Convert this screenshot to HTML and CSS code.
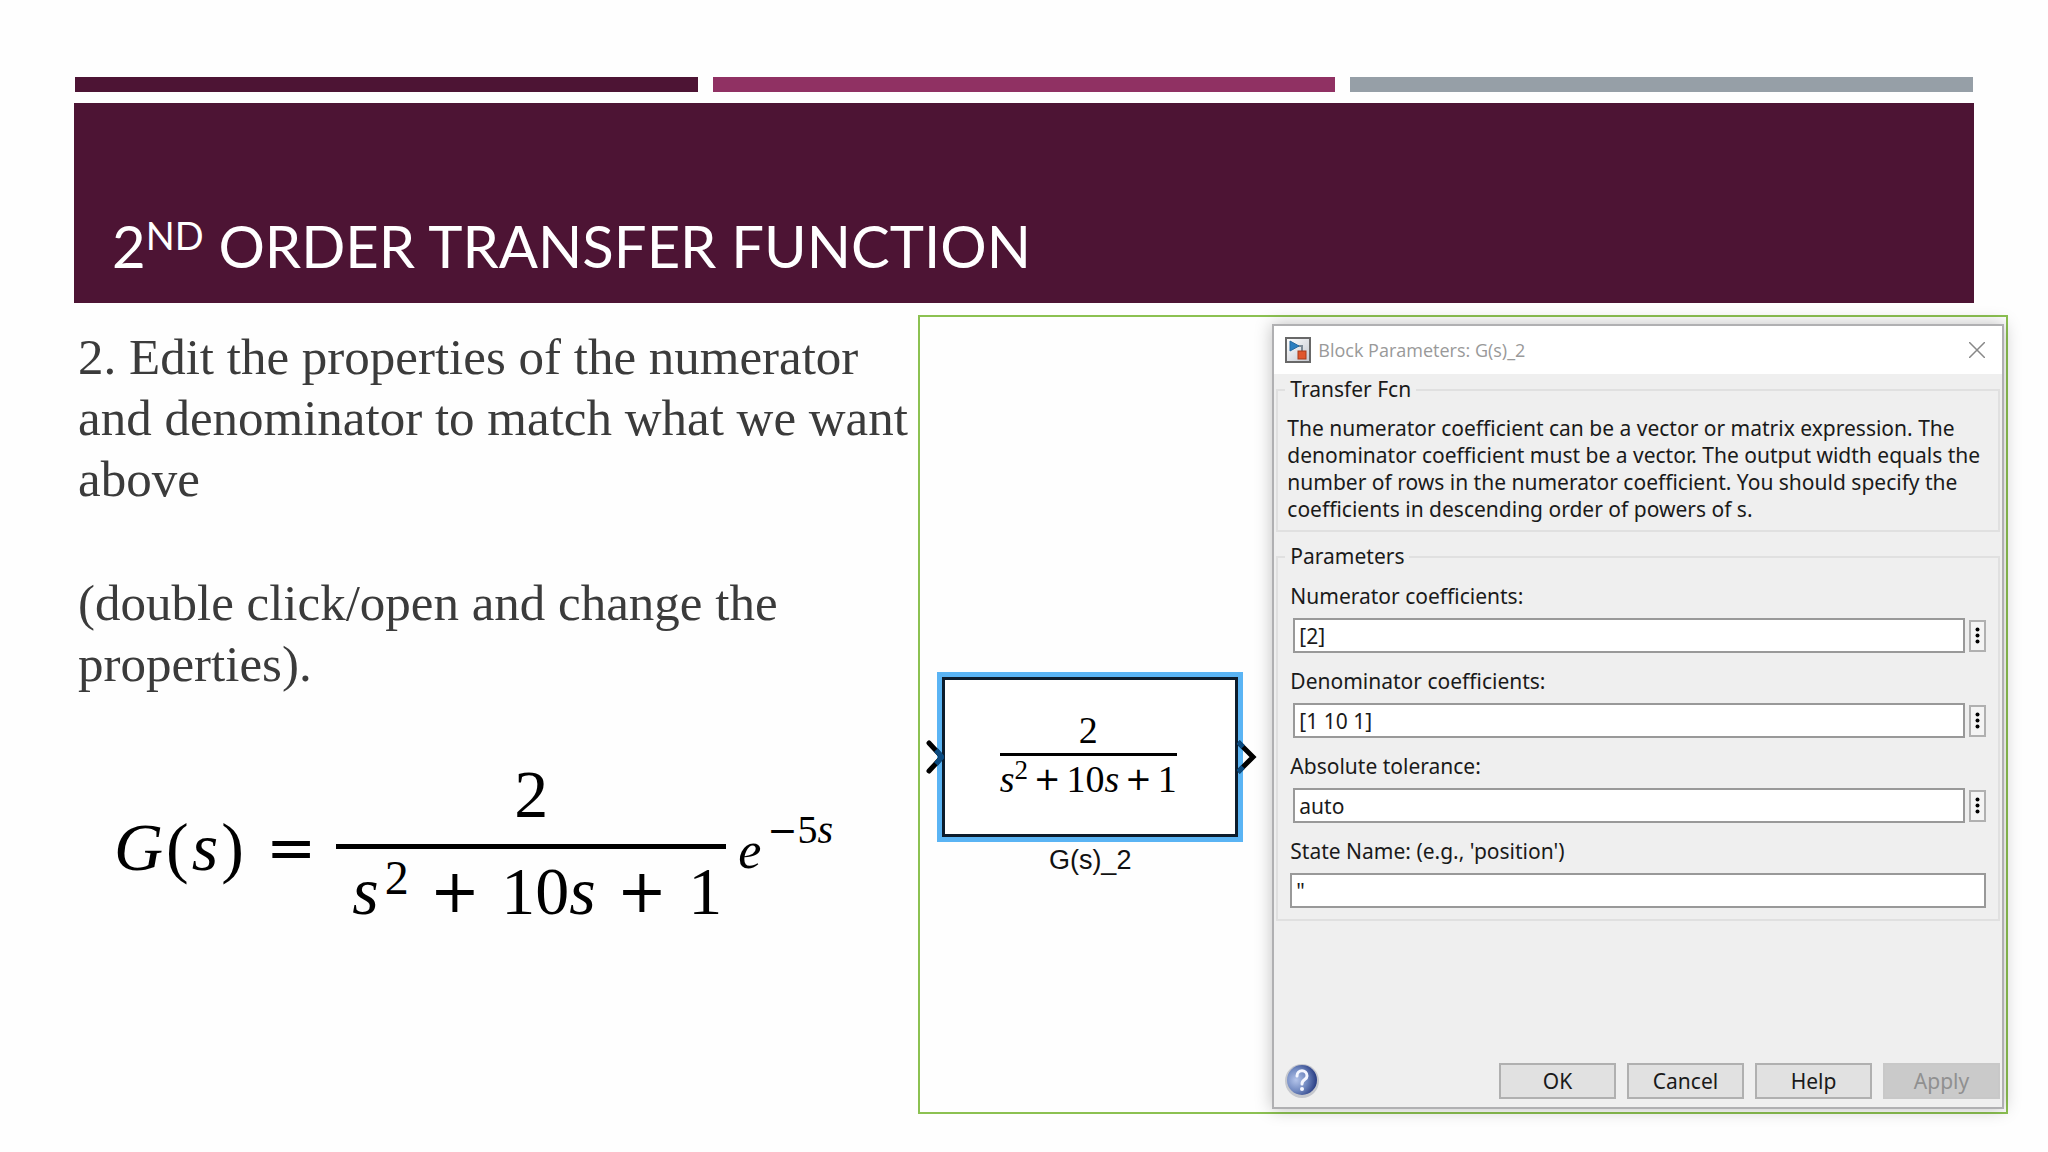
FILE: index.html
```html
<!DOCTYPE html>
<html lang="en">
<head>
    <meta charset="UTF-8">
    <title>2nd Order Transfer Function</title>
    <link rel="stylesheet" href="styles.css">
</head>
<body>
    <div class="stripes">
        <div class="stripe stripe-dark"></div>
        <div class="stripe stripe-pink"></div>
        <div class="stripe stripe-grey"></div>
    </div>

    <header class="banner">
        <h1>2<sup>ND</sup> ORDER TRANSFER FUNCTION</h1>
    </header>

    <main class="content">
        <section class="notes">
            <p>2. Edit the properties of the numerator and denominator to match what we want above</p>
            <p>(double click/open and change the properties).</p>

            <div class="equation">
                <span class="lhs"><i>G</i><span>(</span><i>s</i><span>)</span></span>
                <span class="operator equals">=</span>
                <span class="fraction">
                    <span class="numerator">2</span>
                    <span class="denominator"><span><i>s</i><sup>2</sup></span><span class="operator">+</span><span>10<i>s</i></span><span class="operator">+</span><span>1</span></span>
                </span>
                <span class="exponential"><i>e</i><sup><span class="operator">−</span>5<i>s</i></sup></span>
            </div>
        </section>

        <section class="model">
            <div class="canvas">
                <div class="block">
                    <svg class="port port-in" width="18" height="36" viewBox="0 0 18 36">
                        <path d="M3 4 L16 18 L3 32" fill="none" stroke="#000" stroke-width="5" stroke-linecap="round"/>
                        <path d="M10 11 L16 18 L10 25" fill="none" stroke="#0a4a80" stroke-width="5"/>
                    </svg>
                    <span class="fraction">
                        <span class="numerator">2</span>
                        <span class="denominator"><span><i>s</i><sup>2</sup></span><span class="operator">+</span><span>10<i>s</i></span><span class="operator">+</span><span>1</span></span>
                    </span>
                    <svg class="port port-out" width="20" height="36" viewBox="0 0 20 36">
                        <path d="M1 3 L16 18 L1 33" fill="none" stroke="#000" stroke-width="5"/>
                        <path d="M1 3 L6 8 M1 33 L6 28" fill="none" stroke="#0a4a80" stroke-width="5"/>
                    </svg>
                </div>
                <div class="block-name">G(s)_2</div>
            </div>

            <form class="dialog">
                <div class="titlebar">
                    <svg width="26" height="26" viewBox="0 0 26 26">
                        <defs>
                            <linearGradient id="tile" x1="0" y1="0" x2="1" y2="1">
                                <stop offset="0" stop-color="#fff"/>
                                <stop offset="1" stop-color="#c4c8d0"/>
                            </linearGradient>
                        </defs>
                        <rect x="1" y="1" width="24" height="24" fill="url(#tile)" stroke="#686868" stroke-width="2"/>
                        <path d="M13 9 H17 V14" fill="none" stroke="#7d8a96" stroke-width="2"/>
                        <path d="M5 4 L14 9 L5 14 Z" fill="#2b7fc0" stroke="#2368a0" stroke-width="1"/>
                        <rect x="13" y="14" width="8" height="8" fill="#e0562c" stroke="#a83a18" stroke-width="1"/>
                    </svg>
                    <span class="title">Block Parameters: G(s)_2</span>
                    <button type="button" class="close" aria-label="Close">
                        <svg width="16" height="16" viewBox="0 0 16 16">
                            <path d="M0 0 L16 16 M16 0 L0 16" fill="none" stroke="#888" stroke-width="1.5"/>
                        </svg>
                    </button>
                </div>

                <fieldset class="group about">
                    <legend>Transfer Fcn</legend>
                    <p>The numerator coefficient can be a vector or matrix expression. The<br>
                    denominator coefficient must be a vector. The output width equals the<br>
                    number of rows in the numerator coefficient. You should specify the<br>
                    coefficients in descending order of powers of s.</p>
                </fieldset>

                <fieldset class="group parameters">
                    <legend>Parameters</legend>
                    <label for="numerator">Numerator coefficients:</label>
                    <div class="field">
                        <input type="text" id="numerator" value="[2]">
                        <button type="button" class="more" aria-label="Numerator options"><svg width="5" height="17" viewBox="0 0 5 17"><circle cx="2.5" cy="2.5" r="2"/><circle cx="2.5" cy="8.5" r="2"/><circle cx="2.5" cy="14.5" r="2"/></svg></button>
                    </div>
                    <label for="denominator">Denominator coefficients:</label>
                    <div class="field">
                        <input type="text" id="denominator" value="[1 10 1]">
                        <button type="button" class="more" aria-label="Denominator options"><svg width="5" height="17" viewBox="0 0 5 17"><circle cx="2.5" cy="2.5" r="2"/><circle cx="2.5" cy="8.5" r="2"/><circle cx="2.5" cy="14.5" r="2"/></svg></button>
                    </div>
                    <label for="tolerance">Absolute tolerance:</label>
                    <div class="field">
                        <input type="text" id="tolerance" value="auto">
                        <button type="button" class="more" aria-label="Tolerance options"><svg width="5" height="17" viewBox="0 0 5 17"><circle cx="2.5" cy="2.5" r="2"/><circle cx="2.5" cy="8.5" r="2"/><circle cx="2.5" cy="14.5" r="2"/></svg></button>
                    </div>
                    <label for="state-name">State Name: (e.g., 'position')</label>
                    <div class="field field-wide">
                        <input type="text" id="state-name" value="&quot;">
                    </div>
                </fieldset>

                <div class="actions">
                    <button type="button" class="help-icon" aria-label="Block help">
                        <svg width="36" height="36" viewBox="0 0 36 36">
                            <defs>
                                <radialGradient id="ball" cx="0.3" cy="0.5" r="0.75">
                                    <stop offset="0" stop-color="#b4c4ea"/>
                                    <stop offset="0.5" stop-color="#7088c0"/>
                                    <stop offset="1" stop-color="#1c2f78"/>
                                </radialGradient>
                            </defs>
                            <circle cx="18" cy="18" r="17" fill="#c6c8ce"/>
                            <circle cx="18" cy="17" r="15" fill="url(#ball)"/>
                            <path d="M13 13 C13 6 23 6 23 13 C23 17 18 16 18 21" fill="none" stroke="#f4f6ff" stroke-width="3" stroke-linecap="round"/>
                            <circle cx="18" cy="26" r="2" fill="#f4f6ff"/>
                        </svg>
                    </button>
                    <button type="button">OK</button>
                    <button type="button">Cancel</button>
                    <button type="button">Help</button>
                    <button type="button" disabled>Apply</button>
                </div>
            </form>
        </section>
    </main>
</body>
</html>
```
FILE: styles.css
```css
*
{
    box-sizing: border-box;
}

body
{
    margin: 0;
    padding-top: 77px;
    min-height: 100vh;
    background-color: #fefefe;
    font-family: "Liberation Serif", serif;
}

.stripes
{
    display: flex;
    gap: 15px;
    margin: 0 75px 11px;
}

.stripe
{
    flex: 1;
    height: 15px;
}

.stripe-dark { background-color: #4d1434; }
.stripe-pink { background-color: #903163; }
.stripe-grey { background-color: #969fa7; }

.banner
{
    display: flex;
    align-items: flex-end;
    height: 200px;
    margin: 0 74px 12px;
    padding: 0 38px 23px;
    background-color: #4d1434;
}

.banner h1
{
    margin: 0;
    color: #fff;
    font-family: Lato, sans-serif;
    font-size: 58px;
    font-weight: normal;
    line-height: 68px;
}

.banner sup
{
    font-size: 38px;
    line-height: 0;
    vertical-align: 18px;
}

.content
{
    display: grid;
    grid-template-columns: 840fr 1090fr;
    padding: 0 40px 0 78px;
}

.notes
{
    padding-top: 12px;
    color: #3b3b3b;
    font-size: 51px;
    line-height: 61px;
}

.notes p
{
    margin: 0 0 63px;
}

.fraction
{
    display: flex;
    flex-direction: column;
    align-items: center;
}

.denominator
{
    display: flex;
    justify-content: space-between;
    width: 100%;
}

.operator
{
    font-family: "DejaVu Sans", sans-serif;
}

/* transfer function with the delay term */
.equation
{
    display: flex;
    align-items: center;
    padding-left: 36px;
    color: #000;
    font-size: 68px;
    line-height: 72px;
}

.equation .operator
{
    font-size: 60px;
}

.equation .lhs
{
    display: flex;
    gap: 3px;
    padding-top: 8px;
}

.equation .equals
{
    padding-top: 8px;
    margin: 0 20px 0 22px;
}

.equation .fraction
{
    width: 390px;
}

.equation .numerator
{
    padding-bottom: 14px;
}

.equation .denominator
{
    padding: 6px 4px 0 16px;
    border-top: 5px solid #000;
}

.equation sup
{
    margin-left: 6px;
    font-size: 48px;
    line-height: 0;
    vertical-align: 20px;
}

.equation .exponential
{
    padding: 16px 0 0 12px;
    font-size: 52px;
}

.equation .exponential sup
{
    font-size: 40px;
    vertical-align: 25px;
}

.equation .exponential .operator
{
    font-size: 36px;
}

.model
{
    display: flex;
    height: 799px;
    padding: 7px 2px 3px 0;
    border: 2px solid #8cc152;
}

.canvas
{
    flex: 1;
    padding: 348px 29px 0 17px;
}

.block
{
    position: relative;
    display: flex;
    justify-content: center;
    align-items: center;
    height: 170px;
    padding: 0 4px 5px 0;
    border: 6px solid #5ab4f4;
    background-color: #fff;
    outline: 3px solid #0c1c2c;
    outline-offset: -8px;
    color: #000;
    font-size: 38px;
    line-height: 38px;
}

.port
{
    position: absolute;
    top: 61px;
}

.port-in { left: -17px; }
.port-out { right: -20px; }

.block .fraction
{
    width: 177px;
}

.block .operator
{
    font-size: 32px;
}

.block .denominator
{
    padding-top: 4px;
    border-top: 3px solid #000;
}

.block .numerator
{
    padding-bottom: 4px;
}

.block sup
{
    font-size: 27px;
    line-height: 0;
    vertical-align: 13px;
}

.block-name
{
    margin-top: 2px;
    color: #111;
    font-family: "Liberation Sans", sans-serif;
    font-size: 27px;
    line-height: 32px;
    text-align: center;
}

/* block parameters window */
.dialog
{
    display: flex;
    flex-direction: column;
    width: 67.5%;
    border: 2px solid #b0b0b2;
    background-color: #efefef;
    box-shadow: 0 0 16px rgba(0, 0, 0, 0.25);
    color: #1a1a1a;
    font-family: "Noto Sans", sans-serif;
    font-size: 21px;
    line-height: 27px;
}

.titlebar
{
    display: flex;
    align-items: center;
    gap: 7px;
    height: 48px;
    padding: 0 17px 0 11px;
    background-color: #fff;
}

.title
{
    flex: 1;
    color: #999;
    font-family: "Open Sans", sans-serif;
    font-size: 18px;
}

.dialog button
{
    padding: 0;
    border: 2px solid #b0b0b0;
    background-color: #e1e1e1;
    color: #1a1a1a;
    font: inherit;
}

.dialog svg
{
    display: block;
}

.dialog .close,
.dialog .help-icon
{
    border: 0;
    background: none;
}

.group
{
    min-width: 0;
    margin: 0 2px 11px;
    padding: 0 12px;
    border: 2px solid #e0e0e0;
}

.group legend
{
    margin-left: -5px;
    padding: 0 5px;
}

.about
{
    margin-top: 2px;
}

.group p
{
    margin: 12px -8px 7px -3px;
    white-space: nowrap;
}

.group label
{
    display: block;
    margin-bottom: 8px;
}

.field
{
    display: flex;
    align-items: center;
    gap: 4px;
    height: 35px;
    margin: 0 0 15px 3px;
}

.field-wide
{
    margin: 0 0 11px;
}

.field input
{
    flex: 1;
    min-width: 0;
    height: 35px;
    padding: 0 4px;
    border: 2px solid #999;
    background-color: #fff;
    color: #1a1a1a;
    font: inherit;
}

.dialog .more
{
    display: flex;
    justify-content: center;
    align-items: center;
    width: 17px;
    height: 32px;
    background-color: #f4f4f4;
}

.parameters legend
{
    margin-bottom: 13px;
}

.actions
{
    display: flex;
    align-items: center;
    gap: 11px;
    margin-top: auto;
    padding: 0 2px 8px 10px;
}

.actions button
{
    width: 117px;
    height: 36px;
}

.dialog .help-icon
{
    width: 36px;
    margin-right: auto;
}

.dialog button:disabled
{
    border-color: #c8c8c8;
    background-color: #cacaca;
    color: #909090;
}
```
